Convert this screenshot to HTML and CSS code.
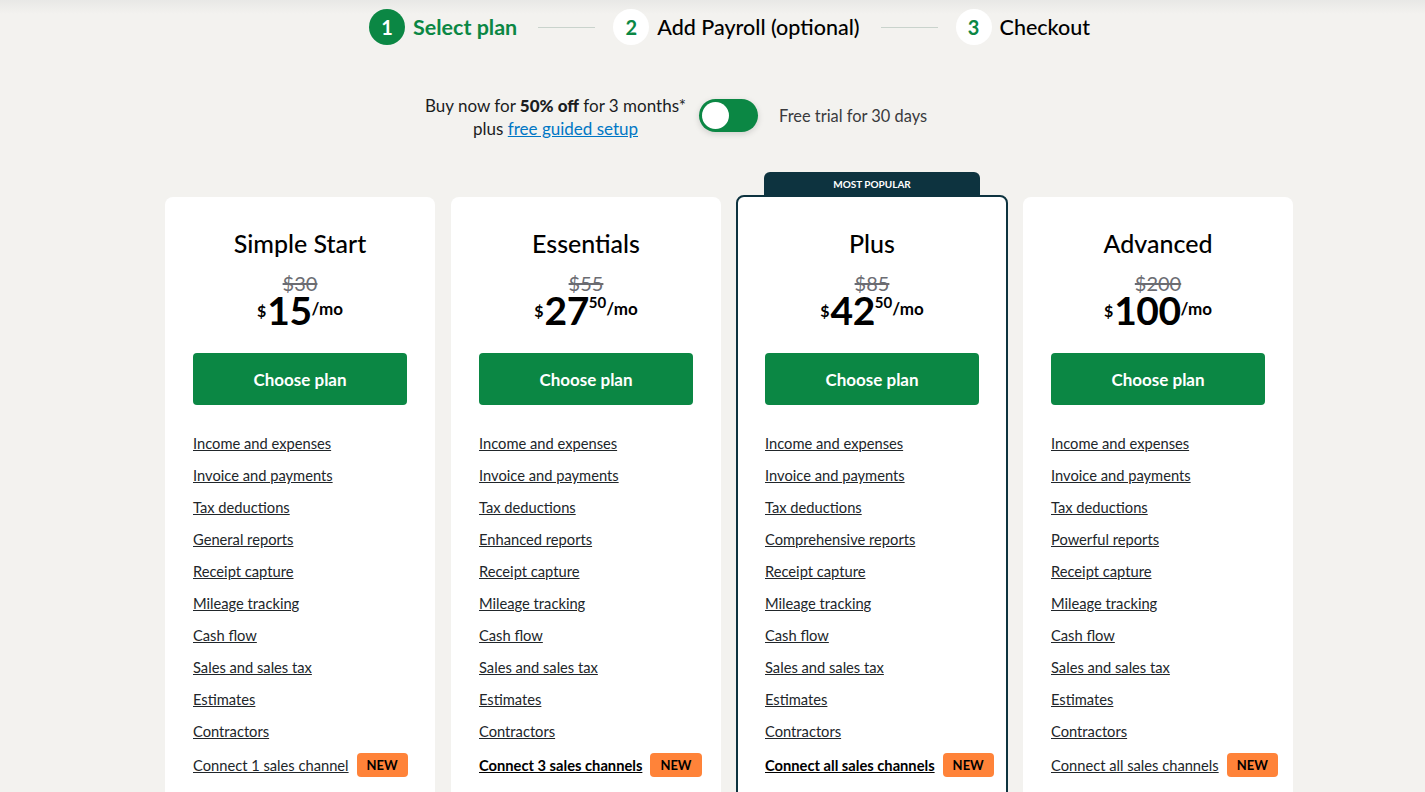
FILE: index.html
```html
<!DOCTYPE html>
<html>
<head>
<meta charset="utf-8">
<link rel="stylesheet" href="styles.css">
</head>
<body>
<div class="page">
  <div class="stepper">
    <div class="step active"><span class="num">1</span><span class="label">Select plan</span></div>
    <span class="sep"></span>
    <div class="step"><span class="num">2</span><span class="label">Add Payroll (optional)</span></div>
    <span class="sep"></span>
    <div class="step"><span class="num">3</span><span class="label">Checkout</span></div>
  </div>

  <div class="offer">
    <div class="offer-text">
      <div>Buy now for <b>50% off</b> for 3 months*</div>
      <div>plus <a href="#">free guided setup</a></div>
    </div>
    <div class="toggle"><span class="knob"></span></div>
    <div class="trial">Free trial for 30 days</div>
  </div>

  <div class="cards">
    <div class="card">
      <h2>Simple Start</h2>
      <div class="old">$30</div>
      <div class="price"><span class="cur">$</span><span class="big">15</span><span class="mo">/mo</span></div>
      <button class="choose">Choose plan</button>
      <ul class="features">
        <li><a href="#">Income and expenses</a></li>
        <li><a href="#">Invoice and payments</a></li>
        <li><a href="#">Tax deductions</a></li>
        <li><a href="#">General reports</a></li>
        <li><a href="#">Receipt capture</a></li>
        <li><a href="#">Mileage tracking</a></li>
        <li><a href="#">Cash flow</a></li>
        <li><a href="#">Sales and sales tax</a></li>
        <li><a href="#">Estimates</a></li>
        <li><a href="#">Contractors</a></li>
        <li class="last"><a href="#">Connect 1 sales channel</a><span class="new">NEW</span></li>
      </ul>
    </div>
    <div class="card">
      <h2>Essentials</h2>
      <div class="old">$55</div>
      <div class="price"><span class="cur">$</span><span class="big">27</span><span class="cents">50</span><span class="mo">/mo</span></div>
      <button class="choose">Choose plan</button>
      <ul class="features">
        <li><a href="#">Income and expenses</a></li>
        <li><a href="#">Invoice and payments</a></li>
        <li><a href="#">Tax deductions</a></li>
        <li><a href="#">Enhanced reports</a></li>
        <li><a href="#">Receipt capture</a></li>
        <li><a href="#">Mileage tracking</a></li>
        <li><a href="#">Cash flow</a></li>
        <li><a href="#">Sales and sales tax</a></li>
        <li><a href="#">Estimates</a></li>
        <li><a href="#">Contractors</a></li>
        <li class="last"><a href="#" class="strong">Connect 3 sales channels</a><span class="new">NEW</span></li>
      </ul>
    </div>
    <div class="card popular">
      <div class="tab">MOST POPULAR</div>
      <h2>Plus</h2>
      <div class="old">$85</div>
      <div class="price"><span class="cur">$</span><span class="big">42</span><span class="cents">50</span><span class="mo">/mo</span></div>
      <button class="choose">Choose plan</button>
      <ul class="features">
        <li><a href="#">Income and expenses</a></li>
        <li><a href="#">Invoice and payments</a></li>
        <li><a href="#">Tax deductions</a></li>
        <li><a href="#">Comprehensive reports</a></li>
        <li><a href="#">Receipt capture</a></li>
        <li><a href="#">Mileage tracking</a></li>
        <li><a href="#">Cash flow</a></li>
        <li><a href="#">Sales and sales tax</a></li>
        <li><a href="#">Estimates</a></li>
        <li><a href="#">Contractors</a></li>
        <li class="last"><a href="#" class="strong">Connect all sales channels</a><span class="new">NEW</span></li>
      </ul>
    </div>
    <div class="card">
      <h2>Advanced</h2>
      <div class="old">$200</div>
      <div class="price"><span class="cur">$</span><span class="big">100</span><span class="mo">/mo</span></div>
      <button class="choose">Choose plan</button>
      <ul class="features">
        <li><a href="#">Income and expenses</a></li>
        <li><a href="#">Invoice and payments</a></li>
        <li><a href="#">Tax deductions</a></li>
        <li><a href="#">Powerful reports</a></li>
        <li><a href="#">Receipt capture</a></li>
        <li><a href="#">Mileage tracking</a></li>
        <li><a href="#">Cash flow</a></li>
        <li><a href="#">Sales and sales tax</a></li>
        <li><a href="#">Estimates</a></li>
        <li><a href="#">Contractors</a></li>
        <li class="last"><a href="#">Connect all sales channels</a><span class="new">NEW</span></li>
      </ul>
    </div>
  </div>
</div>
</body>
</html>
```

FILE: styles.css
```css
* { box-sizing: border-box; }
html, body { margin: 0; padding: 0; }
body {
  background: #f3f2ef;
  font-family: Lato, "Open Sans", sans-serif;
  color: #000;
  height: 792px;
  overflow: hidden;
}
.page {
  background: linear-gradient(#e8e8e6 0px, #f3f2ef 14px);
  min-height: 792px;
}
.stepper {
  display: flex;
  align-items: center;
  height: 54px;
  padding-left: 369px;
}
.step { display: flex; align-items: center; }
.num {
  width: 36px; height: 36px;
  border-radius: 50%;
  background: #fff;
  color: #0b8744;
  display: flex; align-items: center; justify-content: center;
  font-weight: 700;
  font-size: 20px;
}
.step.active .num { background: #0b8744; color: #fff; }
.label {
  margin-left: 8px;
  font-size: 21.5px;
  font-weight: 500;
  color: #000;
}
.step.active .label { color: #0b8744; font-weight: 700; }
.sep {
  width: 57px; height: 1px;
  background: #c9d3cc;
  margin: 0 18px 0 21px;
}
.offer {
  display: flex;
  align-items: center;
  margin-top: 40px;
  padding-left: 425px;
}
.offer-text {
  text-align: center;
  font-size: 17px;
  line-height: 23px;
  color: #1b1d1f;
}
.offer-text b { font-weight: 900; }
.offer-text a { color: #0077c5; text-decoration: underline; }
.toggle {
  width: 59px; height: 33px;
  border-radius: 17px;
  background: #0b8744;
  margin-left: 13px;
  margin-bottom: 4px;
  position: relative;
  box-shadow: 0 2px 6px rgba(0,0,0,0.15);
}
.knob {
  position: absolute;
  left: 3px; top: 3px;
  width: 27px; height: 27px;
  border-radius: 50%;
  background: #fff;
}
.trial {
  margin-left: 21px;
  margin-bottom: 4px;
  font-size: 16.4px;
  color: #393a3d;
}
.cards {
  display: flex;
  gap: 16px;
  margin-top: 57px;
  margin-left: 165px;
  align-items: flex-start;
}
.card {
  width: 270px;
  height: 640px;
  background: #fff;
  border-radius: 8px;
  padding: 30px 28px 0;
  position: relative;
  text-align: center;
}
.card.popular {
  width: 272px;
  border: 2px solid #0d333f;
  padding: 30px 27px 0;
  margin-top: -2px;
  margin-left: -1px;
  margin-right: -1px;
}
.tab {
  position: absolute;
  top: -25px;
  left: 26px;
  width: 216px;
  height: 24px;
  background: #0d333f;
  color: #fff;
  font-size: 10px;
  font-weight: 700;
  line-height: 24px;
  border-radius: 6px 6px 0 0;
}
h2 {
  margin: 0;
  font-size: 25px;
  font-weight: 500;
  line-height: 32px;
}
.old {
  margin-top: 14px;
  font-size: 20px;
  color: #6b6c72;
  text-decoration: line-through;
  line-height: 20px;
}
.price {
  display: flex;
  justify-content: center;
  align-items: flex-start;
  font-weight: 700;
  line-height: 1;
  height: 34px;
}
.cur { font-size: 16px; margin-top: 10px; margin-right: 1px; }
.big { font-size: 39px; line-height: 34px; letter-spacing: -0.5px; }
.cents { font-size: 15px; margin-top: 2px; }
.mo { font-size: 17px; margin-top: 7px; }
.choose {
  display: block;
  width: 214px;
  height: 52px;
  margin-top: 26px;
  background: #0b8744;
  color: #fff;
  border: 0;
  border-radius: 4px;
  font-family: inherit;
  font-weight: 700;
  font-size: 17px;
}
.features {
  list-style: none;
  margin: 29px 0 0;
  padding: 0;
  text-align: left;
}
.features li {
  font-size: 14.7px;
  line-height: 18px;
  margin-bottom: 14px;
  display: flex;
  align-items: center;
  white-space: nowrap;
}
.features a { color: #21262a; text-decoration: underline; }
.features a.strong { font-weight: 700; color: #000; }
.features li.last { margin-top: -1px; }
.new {
  margin-left: 8px;
  background: #ff8339;
  color: #000;
  font-size: 13px;
  font-weight: 700;
  border-radius: 4px;
  padding: 0 10px;
  line-height: 24px;
}
```
